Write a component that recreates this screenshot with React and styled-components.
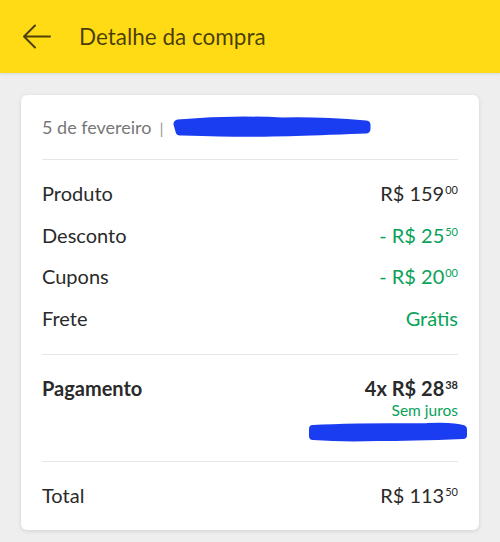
import styled, { createGlobalStyle } from "styled-components";

const GlobalStyle = createGlobalStyle`
  html, body {
    margin: 0;
    padding: 0;
    background: #eeeeee;
    font-family: "Lato", "Open Sans", sans-serif;
  }
`;

const Page = styled.div`
  width: 500px;
  height: 542px;
  background: #eeeeee;
  overflow: hidden;
`;

const Header = styled.header`
  display: flex;
  align-items: center;
  gap: 28px;
  height: 73px;
  padding: 0 22px;
  background: #ffdb15;
  box-shadow: 0 1px 3px rgba(0, 0, 0, 0.1);
`;

const BackButton = styled.button`
  display: flex;
  align-items: center;
  justify-content: center;
  width: 29px;
  height: 29px;
  padding: 0;
  border: none;
  background: none;
  color: rgba(0, 0, 0, 0.7);
`;

const Title = styled.h1`
  margin: 0;
  font-size: 22.5px;
  font-weight: 400;
  color: rgba(0, 0, 0, 0.72);
`;

const Content = styled.main`
  padding: 22px 21px;
`;

const Card = styled.section`
  background: #fff;
  border-radius: 6px;
  box-shadow: 0 1px 4px rgba(0, 0, 0, 0.12);
  padding: 0 21px;
`;

const DateLine = styled.div`
  display: flex;
  align-items: center;
  gap: 8px;
  height: 64px;
  font-size: 18px;
  color: #777;
`;

const Pipe = styled.span`
  color: #999;
  font-size: 16px;
`;

const Section = styled.div`
  display: flex;
  flex-direction: column;
  gap: ${(p) => p.gap || 0}px;
  padding: ${(p) => p.pad || "0"};
  border-top: 1px solid #e6e6e6;
`;

const Row = styled.div`
  display: flex;
  justify-content: space-between;
  align-items: flex-start;
  font-size: 20px;
  line-height: 24px;
  color: #2a2a2a;
  font-weight: ${(p) => (p.bold ? 700 : 400)};
`;

const Amount = styled.span`
  color: ${(p) => (p.green ? "#08a258" : "#2a2a2a")};
`;

const Cents = styled.sup`
  font-size: 11px;
  vertical-align: top;
  position: relative;
  top: -3px;
  margin-left: 1px;
`;

const PayInfo = styled.div`
  display: flex;
  flex-direction: column;
  align-items: flex-end;
`;

const NoInterest = styled.span`
  font-size: 15.5px;
  line-height: 20px;
  color: #08a258;
  font-weight: 400;
`;

const Scribble = styled.svg`
  display: block;
  margin-top: 1px;
  margin-right: -11px;
`;

const Price = ({ value, cents, green, prefix }) => (
  <Amount green={green}>
    {prefix}
    {value}
    <Cents>{cents}</Cents>
  </Amount>
);

const ArrowIcon = () => (
  <svg width="29" height="25" viewBox="0 0 29 25" fill="none">
    <path
      d="M28 12.5H2M13 1.5L2 12.5L13 23.5"
      stroke="currentColor"
      strokeWidth="2"
      strokeLinecap="round"
      strokeLinejoin="round"
    />
  </svg>
);

export default function App() {
  return (
    <Page>
      <GlobalStyle />
      <Header>
        <BackButton aria-label="Voltar">
          <ArrowIcon />
        </BackButton>
        <Title>Detalhe da compra</Title>
      </Header>
      <Content>
        <Card>
          <DateLine>
            <span>5 de fevereiro</span>
            <Pipe>|</Pipe>
            <svg width="200" height="24" viewBox="0 0 200 24">
              <path
                d="M6 9 C40 6 70 5 110 7 C140 6 170 8 194 10 L194 14 C160 15 130 17 100 17 C70 18 40 17 8 16 Z"
                fill="#1b3df2"
                stroke="#1b3df2"
                strokeWidth="9"
                strokeLinejoin="round"
              />
            </svg>
          </DateLine>
          <Section gap={17.6} pad="21px 0 24px">
            <Row>
              <span>Produto</span>
              <Price value="R$ 159" cents="00" />
            </Row>
            <Row>
              <span>Desconto</span>
              <Price green prefix="- " value="R$ 25" cents="50" />
            </Row>
            <Row>
              <span>Cupons</span>
              <Price green prefix="- " value="R$ 20" cents="00" />
            </Row>
            <Row>
              <span>Frete</span>
              <Amount green>Grátis</Amount>
            </Row>
          </Section>
          <Section pad="21px 0 18px">
            <Row bold>
              <span>Pagamento</span>
              <PayInfo>
                <Price value="4x R$ 28" cents="38" />
                <NoInterest>Sem juros</NoInterest>
                <Scribble width="162" height="22" viewBox="0 0 162 22">
                  <path
                    d="M6 8 C40 6 80 6 120 6 C140 5 150 6 156 8 L156 14 C130 15 100 16 70 16 C40 17 20 16 6 15 Z"
                    fill="#1b3df2"
                    stroke="#1b3df2"
                    strokeWidth="8"
                    strokeLinejoin="round"
                  />
                </Scribble>
              </PayInfo>
            </Row>
          </Section>
          <Section pad="21px 0 23px">
            <Row>
              <span>Total</span>
              <Price value="R$ 113" cents="50" />
            </Row>
          </Section>
        </Card>
      </Content>
    </Page>
  );
}
